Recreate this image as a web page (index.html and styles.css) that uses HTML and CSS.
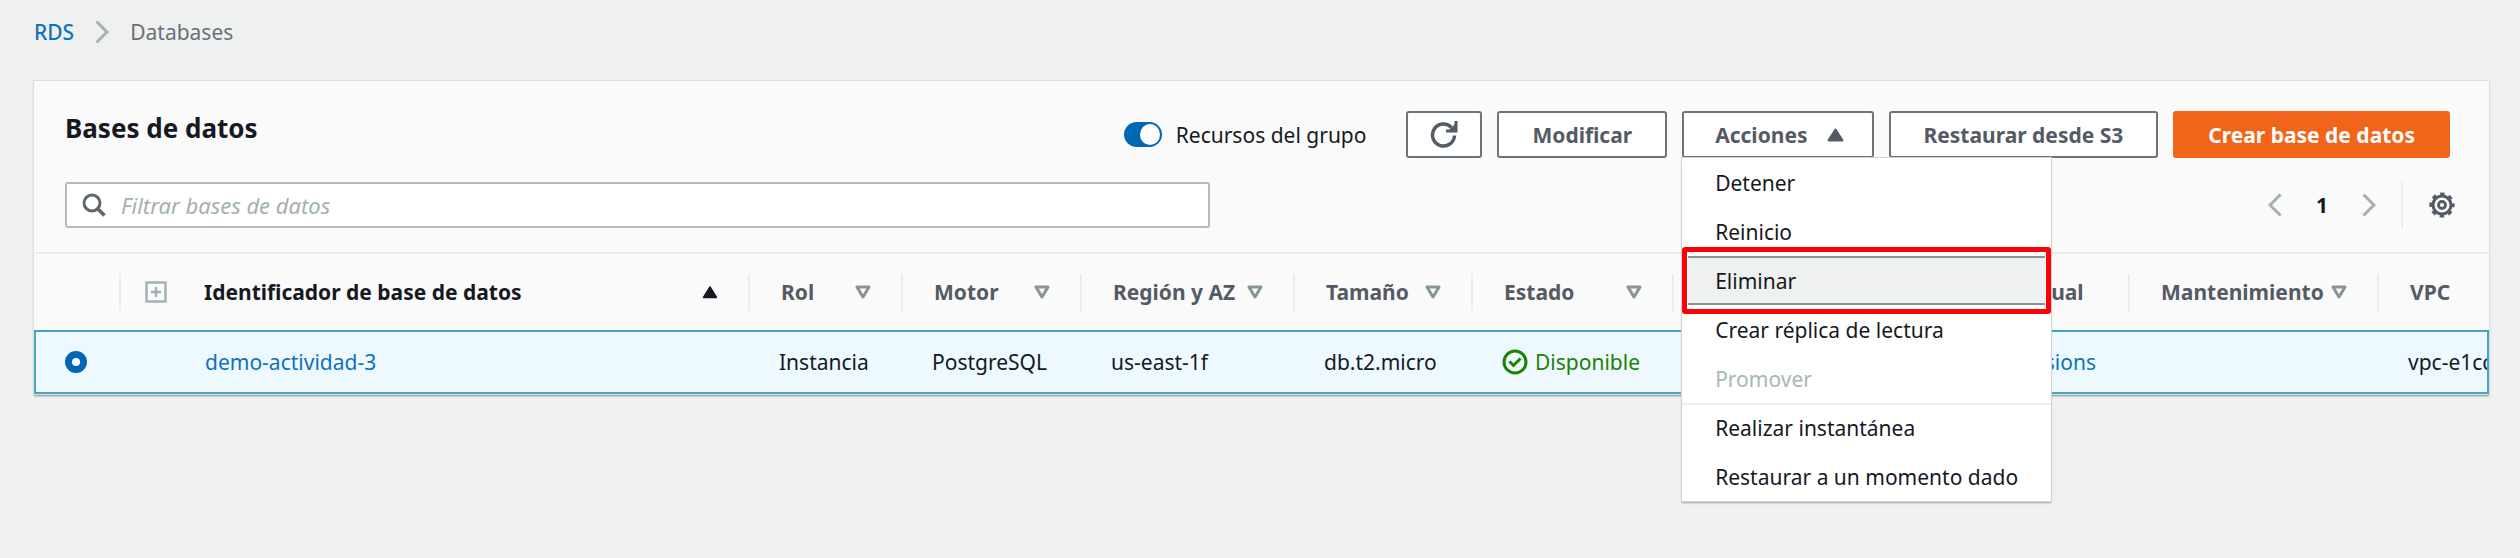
FILE: index.html
```html
<!DOCTYPE html>
<html lang="es">
<head>
<meta charset="utf-8">
<title>RDS - Bases de datos</title>
<link rel="stylesheet" href="styles.css">
</head>
<body>
<svg class="sprite" aria-hidden="true">
  <symbol id="sort" viewBox="0 0 16 14"><path d="M2 2h12L8 12z" fill="none" stroke="currentColor" stroke-width="3" stroke-linejoin="round"/></symbol>
  <symbol id="chevron" viewBox="0 0 14 24"><path d="M1.500 1.500L12 12 1.500 22.500" fill="none" stroke="currentColor" stroke-width="3"/></symbol>
</svg>

<nav class="breadcrumb" aria-label="Ruta">
  <a href="#">RDS</a>
  <svg class="chevron"><use href="#chevron"/></svg>
  <span>Databases</span>
</nav>

<main class="panel">
  <header class="panel-head">
    <div class="title-row">
      <h1>Bases de datos</h1>
      <div class="actions">
        <label class="toggle"><input type="checkbox" role="switch" checked>Recursos del grupo</label>
        <button class="btn btn-icon" type="button" aria-label="Actualizar">
          <svg viewBox="0 0 28 30"><path d="M24.500 15.500A11 11 0 1 1 21.500 7.500" fill="none" stroke="currentColor" stroke-width="3.500"/><path d="M26 1v10H16" fill="none" stroke="currentColor" stroke-width="3"/><path d="M25 4v6h-6z" fill="currentColor"/></svg>
        </button>
        <button class="btn" type="button">Modificar</button>
        <div class="dropdown">
          <button class="btn btn-menu" type="button" aria-expanded="true">Acciones
            <svg viewBox="0 0 16 13"><path d="M8 1.500L14.500 11.500h-13z" fill="currentColor" stroke="currentColor" stroke-width="2" stroke-linejoin="round"/></svg>
          </button>
          <div class="menu" role="menu">
            <button type="button" role="menuitem">Detener</button>
            <button type="button" role="menuitem">Reinicio</button>
            <button class="is-active" type="button" role="menuitem">Eliminar</button>
            <button type="button" role="menuitem">Crear réplica de lectura</button>
            <button type="button" role="menuitem" disabled>Promover</button>
            <button class="is-divided" type="button" role="menuitem">Realizar instantánea</button>
            <button type="button" role="menuitem">Restaurar a un momento dado</button>
          </div>
        </div>
        <button class="btn" type="button">Restaurar desde S3</button>
        <button class="btn btn-primary" type="button">Crear base de datos</button>
      </div>
    </div>
    <div class="filter-row">
      <label class="search">
        <svg viewBox="0 0 24 24"><circle cx="10" cy="10" r="8" fill="none" stroke="currentColor" stroke-width="3"/><path d="M15.500 15.500L22.500 22.500" stroke="currentColor" stroke-width="3.500"/></svg>
        <input type="text" placeholder="Filtrar bases de datos" aria-label="Filtrar bases de datos">
      </label>
      <div class="pager">
        <button type="button" aria-label="Anterior"><svg class="chevron is-left"><use href="#chevron"/></svg></button>
        <button class="page" type="button" aria-current="page">1</button>
        <button type="button" aria-label="Siguiente"><svg class="chevron"><use href="#chevron"/></svg></button>
        <button class="settings" type="button" aria-label="Preferencias">
          <svg viewBox="0 0 26 26" fill="none" stroke="currentColor"><circle cx="13" cy="13" r="9" stroke-width="3"/><circle cx="13" cy="13" r="11.300" stroke-width="2.600" stroke-dasharray="4.440 4.440" stroke-dashoffset="2.220"/><circle cx="13" cy="13" r="3.500" stroke-width="2.800"/></svg>
        </button>
      </div>
    </div>
  </header>

  <table>
    <colgroup>
      <col class="c-select"><col class="c-id"><col class="c-role"><col class="c-engine"><col class="c-region"><col class="c-size"><col class="c-status"><col class="c-cpu"><col class="c-activity"><col class="c-maint"><col class="c-vpc">
    </colgroup>
    <thead>
      <tr>
        <th scope="col" aria-label="Selección"></th>
        <th scope="col" class="sorted"><div class="th"><svg class="expand" viewBox="0 0 22 22"><path d="M1.500 1.500h19v19h-19zM11 6v10M6 11h10" fill="none" stroke="currentColor" stroke-width="2.500"/></svg><span>Identificador de base de datos</span><svg class="sort" viewBox="0 0 16 14"><path d="M8 2l6.500 10.500h-13z" fill="currentColor" stroke="currentColor" stroke-width="1.500" stroke-linejoin="round"/></svg></div></th>
        <th scope="col"><div class="th"><span>Rol</span><svg class="sort"><use href="#sort"/></svg></div></th>
        <th scope="col"><div class="th"><span>Motor</span><svg class="sort"><use href="#sort"/></svg></div></th>
        <th scope="col"><div class="th"><span>Región y AZ</span><svg class="sort"><use href="#sort"/></svg></div></th>
        <th scope="col"><div class="th"><span>Tamaño</span><svg class="sort"><use href="#sort"/></svg></div></th>
        <th scope="col"><div class="th"><span>Estado</span><svg class="sort"><use href="#sort"/></svg></div></th>
        <th scope="col" aria-label="CPU"><div class="th"></div></th>
        <th scope="col"><div class="th"><span>Actividad actual</span></div></th>
        <th scope="col"><div class="th"><span>Mantenimiento</span><svg class="sort"><use href="#sort"/></svg></div></th>
        <th scope="col"><div class="th"><span>VPC</span></div></th>
      </tr>
    </thead>
    <tbody>
      <tr>
        <td class="select"><input type="radio" name="db" checked aria-label="demo-actividad-3"></td>
        <td class="id"><a href="#">demo-actividad-3</a></td>
        <td>Instancia</td>
        <td>PostgreSQL</td>
        <td>us-east-1f</td>
        <td>db.t2.micro</td>
        <td><span class="status"><svg viewBox="0 0 26 26" fill="none" stroke="currentColor" stroke-width="3"><circle cx="13" cy="13" r="11"/><path d="M7.500 12.500l4 4 7-7"/></svg>Disponible</span></td>
        <td></td>
        <td class="activity"><a href="#">0 Sessions</a></td>
        <td></td>
        <td>vpc-e1cc</td>
      </tr>
    </tbody>
  </table>
</main>
</body>
</html>
```
FILE: styles.css
```css
* { box-sizing: border-box; }

body {
  min-height: 100vh;
  margin: 0;
  padding: 0 31px 0 34px;
  background: #eff1f0;
  color: #16191f;
  font: 21px/32px "Noto Sans", "Open Sans", sans-serif;
}

button, input { font: inherit; color: inherit; }
button { border: 0; background: none; padding: 0; cursor: pointer; }
a { color: #0f73bb; text-decoration: none; }
svg { display: block; flex: none; }
.sprite { position: absolute; width: 0; height: 0; }

.breadcrumb {
  display: flex;
  align-items: center;
  gap: 21px;
  padding: 16px 0 33px;
  color: #687078;
}
.breadcrumb a { font-weight: 500; }
.chevron { width: 14px; height: 24px; color: #a2b1b1; }
.is-left { transform: rotate(180deg); }

.panel {
  background: #fafafa;
  box-shadow: 0 0 0 1px #dcdfe0, 0 2px 2px #7f8b8f;
}
.panel-head {
  padding: 30px 39px 24px 31px;
  border-bottom: 2px solid #eaeded;
}
.title-row, .filter-row {
  display: flex;
  justify-content: space-between;
  align-items: flex-start;
}
h1 { margin: 0; font-size: 26px; line-height: 34px; }

.actions { display: flex; align-items: center; gap: 15px; }
.toggle { display: flex; align-items: center; gap: 14px; margin-right: 25px; }
.toggle input {
  appearance: none;
  display: flex;
  justify-content: flex-end;
  width: 38px;
  height: 25px;
  margin: 0;
  padding: 2px;
  border-radius: 13px;
  background: #0067b4;
}
.toggle input::before { content: ""; width: 20px; height: 21px; border-radius: 50%; background: #fff; }

.btn {
  display: flex;
  align-items: center;
  height: 47px;
  padding: 0 33px;
  border: 2px solid #6b737b;
  border-radius: 3px;
  background: #fff;
  color: #545b64;
  font-weight: 700;
  white-space: nowrap;
}
.btn-icon { padding: 0 22px; }
.btn-icon svg { width: 28px; height: 30px; }
.btn-menu { gap: 19px; padding: 0 28px 0 31px; }
.btn-menu svg { width: 17px; height: 14px; }
.btn-primary { border-color: #f26419; background: #f26419; color: #fff; }

.dropdown { position: relative; }
.menu {
  position: absolute;
  z-index: 2;
  top: 100%;
  left: 0;
  display: flex;
  flex-direction: column;
  background: #fff;
  box-shadow: 0 0 0 1px #cfd5d6, 0 2px 2px #98a3a6;
}
.menu button {
  height: 49px;
  padding: 0 33px;
  text-align: left;
  white-space: nowrap;
}
.menu button:disabled { color: #aab7b8; }
.menu .is-divided { box-shadow: inset 0 2px #eceeee; }
.menu .is-active {
  position: relative;
  border: solid #879596;
  border-width: 2px 0;
  background: #eff1f0;
}
/* Callout frame round the active entry */
.menu .is-active::after {
  content: "";
  position: absolute;
  inset: -11px 0;
  border: 5px solid #ff0008;
  border-radius: 3px;
  box-shadow: inset 0 0 0 1px #fff;
}

.filter-row { margin-top: 24px; align-items: center; }
.search {
  display: flex;
  align-items: center;
  gap: 15px;
  flex: 0 0 48%;
  height: 46px;
  padding: 0 15px;
  border: 2px solid #b0bcbd;
  border-radius: 3px;
  background: #fff;
  color: #5f6871;
}
.search svg { width: 24px; height: 24px; }
.search input { flex: 1; min-width: 0; padding: 0; border: 0; outline: 0; background: none; font-size: 22px; }
.search input::placeholder { color: #a3b0b1; font-style: italic; opacity: 1; }

.pager { display: flex; align-items: center; gap: 34px; }
.page { font-weight: 700; }
.settings {
  height: 46px;
  margin-left: -9px;
  margin-right: -5px;
  padding-left: 26px;
  border-left: 2px solid #eaeded;
  color: #545b64;
}
.settings svg { width: 26px; height: 26px; }

table { width: 100%; table-layout: fixed; border-collapse: collapse; }
.c-select { width: 85px; }
.c-role { width: 153px; }
.c-engine { width: 179px; }
.c-region { width: 213px; }
.c-size { width: 178px; }
.c-status { width: 201px; }
.c-cpu { width: 210px; }
.c-activity { width: 246px; }
.c-maint { width: 249px; }
.c-vpc { width: 112px; }

th { height: 76px; padding: 0; color: #545b64; text-align: left; white-space: nowrap; }
th + th .th { border-left: 2px solid #eaeded; }
.th { display: flex; align-items: center; height: 37px; padding: 0 30px 0 31px; }
.sort { width: 16px; height: 14px; margin-left: auto; color: #879596; }
.sorted .th { padding-left: 24px; }
.sorted, .sorted .sort { color: #16191f; }
.expand { width: 22px; height: 22px; margin-right: 37px; color: #a2b1b1; }

tbody tr { background: #edf8ff; outline: 2px solid #45a6c4; outline-offset: -2px; }
td { height: 64px; padding: 0 0 0 31px; overflow: hidden; white-space: nowrap; }
td.id { padding-left: 86px; }
.select input {
  appearance: none;
  display: block;
  width: 22px;
  height: 22px;
  margin: 0;
  border: 7px solid #0067b4;
  border-radius: 50%;
  background: #fff;
}
.status { display: flex; align-items: center; gap: 7px; color: #1d8102; }
.status svg { width: 26px; height: 26px; }
td.activity { padding-right: 32px; text-align: right; }
```
